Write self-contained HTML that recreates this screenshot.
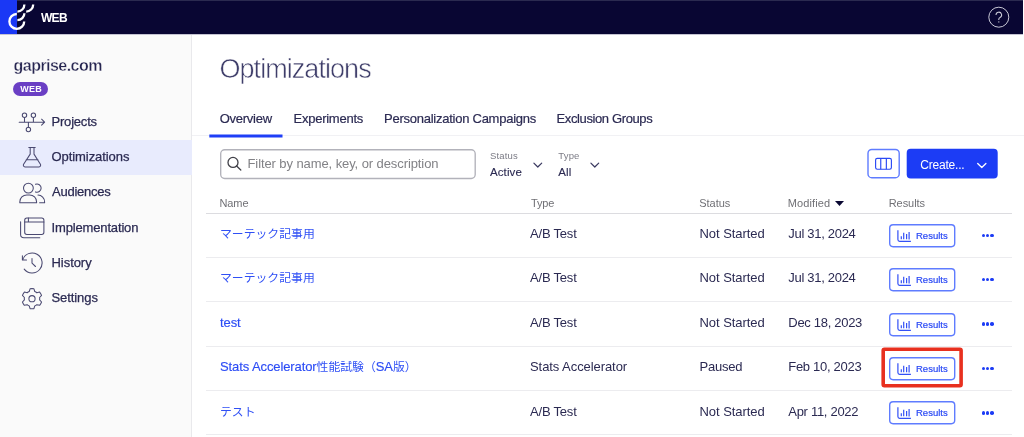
<!DOCTYPE html>
<html lang="en"><head><meta charset="utf-8"><title>Optimizations</title>
<style>
*{box-sizing:border-box;margin:0;padding:0}
html,body{width:1024px;height:437px;overflow:hidden;background:#fff}
body{font-family:"Liberation Sans",sans-serif;color:#2c2b55;position:relative;font-size:13px}
.abs{position:absolute}
#hdr{position:absolute;left:0;top:0;width:1023px;height:34px;background:#090633;border-top:1px solid #2b2a50}
#hdrline{position:absolute;left:0;top:34px;width:1023px;height:1px;background:#c4c3d2}
#bluebar{position:absolute;left:0;top:0;width:17px;height:34px;background:#1a38f5}
#logo{position:absolute;left:0;top:0}
#hweb{position:absolute;left:40.9px;top:9.8px;font-size:12px;font-weight:bold;color:#fff;line-height:16px;letter-spacing:-0.6px}
#help{position:absolute;left:987px;top:6px}
#side{position:absolute;left:0;top:35px;width:192px;height:402px;background:#fafafa;border-right:1px solid #e9e9ec}
#site{position:absolute;left:13.6px;top:54.5px;font-size:16px;font-weight:bold;line-height:22px;letter-spacing:-0.55px;color:#262550;-webkit-text-stroke:0.35px #fafafa}
#badge{position:absolute;left:13.3px;top:82px;width:35px;height:14px;border-radius:7px;background:#6a3fc4;color:#fff;font-size:9px;font-weight:bold;line-height:14px;text-align:center;letter-spacing:0.2px;padding-left:0.6px}
.nav{position:absolute;left:0;width:191px;height:35px}
.nav.sel{background:#e8ebfd;width:192px}
.nav span{position:absolute;left:51.5px;top:9.3px;line-height:16px;font-size:13px;letter-spacing:-0.2px;color:#2b2a52;-webkit-text-stroke:0.25px #2b2a52}
.nav svg{position:absolute;left:0;top:0;fill:none;stroke:#4a4971;stroke-width:1.05;stroke-linecap:round;stroke-linejoin:round}
#title{position:absolute;left:219.5px;top:52.8px;font-size:27px;line-height:32px;letter-spacing:-0.95px;color:#3f3e6a;-webkit-text-stroke:0.55px #fff}
.tab{position:absolute;top:111px;font-size:13px;line-height:16px;letter-spacing:-0.25px;color:#2b2a52;-webkit-text-stroke:0.2px #2b2a52;white-space:nowrap}
#tabline{position:absolute;left:192px;top:135px;width:832px;height:1px;background:#f1f1f4}
#search{position:absolute;left:219.6px;top:148.8px;width:256px;height:30.2px}
#search span{position:absolute;left:27.9px;top:7.5px;font-size:13px;line-height:16px;color:#828286;letter-spacing:-0.09px;white-space:nowrap}
#search svg{position:absolute;left:0;top:0;overflow:visible}
.flab{position:absolute;top:150px;font-size:9.5px;line-height:12px;color:#7c7c86;letter-spacing:0.15px}
.chev{position:absolute}
.fval{position:absolute;top:164.7px;font-size:11.5px;line-height:14px;color:#2b2a52;-webkit-text-stroke:0.12px #2b2a52;letter-spacing:0.1px}
#create{position:absolute;left:906.7px;top:149px;width:91px;height:29.5px;color:#fff}
#create span{position:absolute;left:13.5px;top:7.7px;font-size:12px;line-height:16px;letter-spacing:-0.2px}
.th{position:absolute;top:195.8px;font-size:11px;line-height:14px;color:#707075;letter-spacing:-0.05px}
#thline{position:absolute;left:206px;top:213px;width:805.5px;height:1px;background:#dcdce0}
.row{position:absolute;left:206px;width:805.5px;height:44.36px;border-bottom:1px solid #ececef}
.c{position:absolute;top:12.6px;line-height:16px;font-size:13px;white-space:nowrap;color:#2b2a52;letter-spacing:-0.2px}
.name{left:14px;color:#2c4cf5}
.type{left:324px}
.status{left:493.5px}
.mod{left:582.3px;letter-spacing:-0.3px}
.cjk{font-family:"Liberation Sans","Noto Sans CJK JP",sans-serif;font-size:11.85px;letter-spacing:0;color:#3050f5;display:inline-block;line-height:16px}
.lt{letter-spacing:-0.1px;-webkit-text-stroke:0.15px #2c4cf5}
.rbtn{position:absolute;left:682.8px;top:10.5px;width:67px;height:24px}
.rbtn span{position:absolute;left:27.2px;top:5.9px;font-size:9.5px;line-height:12px;color:#2a49f5;letter-spacing:0;-webkit-text-stroke:0.2px #2a49f5}
.rbtn .ri{position:absolute;left:0;top:0}
.dots{position:absolute;left:775.8px;top:20.1px;width:13px;height:4px}
.dots i{position:absolute;top:0;width:3.5px;height:3.5px;border-radius:50%;background:#1c3cf5}
.dots i:nth-child(1){left:0}.dots i:nth-child(2){left:4.15px}.dots i:nth-child(3){left:8.3px}
#wrap{position:absolute;left:0;top:0;width:1024px;height:437px;will-change:transform}
</style></head><body><div id="wrap">
<div id="hdr"></div><div id="hdrline"></div><div id="bluebar"></div>
<svg id="logo" width="40" height="34" viewBox="0 0 40 34" fill="none" stroke="#fff" stroke-width="2.3">
<path d="M16.8 14A7.4 7.4 0 1 0 24.2 21.4"/>
<path d="M24.4 13.2A7 7 0 0 1 17.4 20.2"/>
<path d="M24.4 4.6A7 7 0 0 1 17.4 11.6"/>
<path d="M33.2 4.6A7 7 0 0 1 26.2 11.6"/>
</svg>
<div id="hweb">WEB</div>
<svg id="help" width="24" height="24" viewBox="0 0 24 24" fill="none" stroke="#c9c9d6" stroke-width="1"><circle cx="11.8" cy="11.2" r="10"/><g transform="translate(11.8 11.5) scale(.88) translate(-11.8 -11.5)"><path d="M8.6 8.6a3.2 3.2 0 1 1 4.6 2.9c-.9.5-1.4 1.1-1.4 2.1v.6" stroke-width="1.2"/><circle cx="11.8" cy="16.5" r=".75" fill="#c9c9d6" stroke="none"/></g></svg>

<div id="side"></div>
<div id="site">gaprise.com</div>
<div id="badge">WEB</div>

<div class="nav" style="top:104.5px"><svg width="50" height="35" viewBox="0 104.5 50 35"><path d="M19.2 121.7H44.6M41.6 118.7l3 3-3 3M24.5 117v4.7M33.4 117v4.7M28.4 121.7v5"/><circle cx="24.5" cy="114.7" r="2.2"/><circle cx="33.4" cy="114.7" r="2.2"/><circle cx="28.4" cy="129" r="2.2"/></svg><span>Projects</span></div>
<div class="nav sel" style="top:139.7px"><svg width="50" height="35" viewBox="0 139.7 50 35"><path d="M28.8 147.2h6.4M30.2 147.2v6.6l-6.6 10.2a1.7 1.7 0 0 0 1.4 2.6h14a1.7 1.7 0 0 0 1.4-2.6l-6.4-10.2v-6.6M26.2 159.4h11.8"/></svg><span style="letter-spacing:-0.07px">Optimizations</span></div>
<div class="nav" style="top:174.5px"><svg width="50" height="35" viewBox="0 174.5 50 35"><circle cx="28.4" cy="187.6" r="4.9"/><path d="M19.8 202.2v-.8a7 7 0 0 1 7-7h2.8a7 7 0 0 1 7 7v.8zM35.5 183.8a4.1 4.1 0 1 1 0 7.6M38 194.6a6.8 6.8 0 0 1 6.6 6.8v.8h-5"/></svg><span style="letter-spacing:-0.25px;left:52px">Audiences</span></div>
<div class="nav" style="top:209.5px"><svg width="50" height="35" viewBox="0 209.5 50 35"><rect x="24.7" y="217.5" width="19.2" height="16.5" rx="2.2"/><path d="M24.7 221.5h19.2M28.4 217.5v4M20.6 221.3v12.6a3.3 3.3 0 0 0 3.3 3.3h15.9"/></svg><span style="top:10.2px;letter-spacing:-0.15px">Implementation</span></div>
<div class="nav" style="top:244.5px"><svg width="50" height="35" viewBox="0 244.5 50 35"><path d="M22.6 259.3A10 10 0 1 1 24.2 268.6M22.4 255.3v4.1h4.1M32 258v4.6l3.5 3.4"/></svg><span style="top:10.1px;letter-spacing:-0.05px">History</span></div>
<div class="nav" style="top:279.5px"><svg width="50" height="35" viewBox="0 279.5 50 35"><path d="M34.76 291.01L33.93 288.29A10.10 10.10 0 0 0 30.07 288.29L29.24 291.01A7.70 7.70 0 0 0 27.15 292.22L24.38 291.57A10.10 10.10 0 0 0 22.45 294.91L24.39 297.00A7.70 7.70 0 0 0 24.39 299.40L22.45 301.49A10.10 10.10 0 0 0 24.38 304.83L27.15 304.18A7.70 7.70 0 0 0 29.24 305.39L30.07 308.11A10.10 10.10 0 0 0 33.93 308.11L34.76 305.39A7.70 7.70 0 0 0 36.85 304.18L39.62 304.83A10.10 10.10 0 0 0 41.55 301.49L39.61 299.40A7.70 7.70 0 0 0 39.61 297.00L41.55 294.91A10.10 10.10 0 0 0 39.62 291.57L36.85 292.22A7.70 7.70 0 0 0 34.76 291.01Z"/><circle cx="32" cy="298.2" r="3.1"/></svg><span style="top:10px;letter-spacing:-0.08px">Settings</span></div>

<div id="title">Optimizations</div>
<div class="tab" style="left:219.7px">Overview</div>
<div class="tab" style="left:293.5px">Experiments</div>
<div class="tab" style="left:384px">Personalization Campaigns</div>
<div class="tab" style="left:556.5px;letter-spacing:-0.38px">Exclusion Groups</div>
<div id="tabline"></div><svg class="abs" style="left:208px;top:133px" width="76" height="6" viewBox="208 133 76 6"><rect x="209.3" y="134.5" width="73.2" height="3" fill="#1f3ff7"/></svg>

<div id="search"><svg width="256" height="31" viewBox="0 0 256 31" fill="none" stroke="#404048" stroke-width="1.3" stroke-linecap="round"><rect x="0.7" y="0.7" width="254.5" height="28.8" rx="4" stroke="#b2b2ba" stroke-width="1.35"/><circle cx="13" cy="13.4" r="5"/><path d="M16.6 17l4.2 4"/></svg><span>Filter by name, key, or description</span></div>
<div class="flab" style="left:490px">Status</div><div class="fval" style="left:490px">Active</div>
<svg class="chev" style="left:532px;top:160px" width="12" height="10" viewBox="0 0 12 10" fill="none" stroke="#3a3960" stroke-width="1.2" stroke-linecap="round" stroke-linejoin="round"><path d="M1.9 3.1l3.9 3.9L9.7 3.1"/></svg>
<div class="flab" style="left:558.3px">Type</div><div class="fval" style="left:558.3px">All</div>
<svg class="chev" style="left:589px;top:160px" width="12" height="10" viewBox="0 0 12 10" fill="none" stroke="#3a3960" stroke-width="1.2" stroke-linecap="round" stroke-linejoin="round"><path d="M1.9 3.1l3.9 3.9L9.7 3.1"/></svg>

<svg class="abs" style="left:866px;top:147px" width="134" height="33" viewBox="866 147 134 33" fill="none"><rect x="868" y="149.5" width="31.2" height="28.2" rx="3.8" stroke="#5f7cff" stroke-width="1.4"/><rect x="875.6" y="158.4" width="15.8" height="10.8" rx="1.7" stroke="#2a49f5" stroke-width="1.15"/><path d="M880.75 158.4v10.8M886.35 158.4v10.8" stroke="#2a49f5" stroke-width="1.15"/><rect x="906.7" y="148.8" width="91" height="29.6" rx="4" fill="#1c3cf5"/><path d="M977.7 163.5l4.1 4 4.1-4" stroke="#fff" stroke-width="1.3" stroke-linecap="round" stroke-linejoin="round"/></svg>
<div id="create"><span>Create...</span></div>

<div class="th" style="left:219.4px">Name</div>
<div class="th" style="left:530.9px;letter-spacing:-0.1px">Type</div>
<div class="th" style="left:699.3px">Status</div>
<div class="th" style="left:787.8px;letter-spacing:0.1px">Modified</div>
<svg class="abs" style="left:835px;top:201px" width="9" height="5" viewBox="0 0 9 5"><path d="M0 0h9L4.5 5z" fill="#0a0833"/></svg>
<div class="th" style="left:888.7px">Results</div>
<div id="thline"></div>
<div class="row" style="top:213.50px">
<div class="c name"><span class="cjk">マーテック記事用</span></div><div class="c type">A/B Test</div><div class="c status" style="letter-spacing:-0.05px">Not Started</div><div class="c mod">Jul 31, 2024</div>
<div class="rbtn"><svg class="ri" width="67" height="24" viewBox="0 0 67 24"><rect x="0.7" y="0.7" width="65" height="22" rx="3.4" fill="none" stroke="#5f7cff" stroke-width="1.4"/><path d="M8.9 6.3V15.6a1.8 1.8 0 0 0 1.8 1.8H21.9M12.3 15.3V12.3M14.7 15.3V8.7M17.6 15.3V10M20.1 15.5V8" fill="none" stroke="#3350f6" stroke-width="1.2"/></svg><span>Results</span></div>
<div class="dots"><i></i><i></i><i></i></div>
</div>
<div class="row" style="top:257.86px">
<div class="c name"><span class="cjk">マーテック記事用</span></div><div class="c type">A/B Test</div><div class="c status" style="letter-spacing:-0.05px">Not Started</div><div class="c mod">Jul 31, 2024</div>
<div class="rbtn"><svg class="ri" width="67" height="24" viewBox="0 0 67 24"><rect x="0.7" y="0.7" width="65" height="22" rx="3.4" fill="none" stroke="#5f7cff" stroke-width="1.4"/><path d="M8.9 6.3V15.6a1.8 1.8 0 0 0 1.8 1.8H21.9M12.3 15.3V12.3M14.7 15.3V8.7M17.6 15.3V10M20.1 15.5V8" fill="none" stroke="#3350f6" stroke-width="1.2"/></svg><span>Results</span></div>
<div class="dots"><i></i><i></i><i></i></div>
</div>
<div class="row" style="top:302.22px">
<div class="c name"><span class="lt">test</span></div><div class="c type">A/B Test</div><div class="c status" style="letter-spacing:-0.05px">Not Started</div><div class="c mod">Dec 18, 2023</div>
<div class="rbtn"><svg class="ri" width="67" height="24" viewBox="0 0 67 24"><rect x="0.7" y="0.7" width="65" height="22" rx="3.4" fill="none" stroke="#5f7cff" stroke-width="1.4"/><path d="M8.9 6.3V15.6a1.8 1.8 0 0 0 1.8 1.8H21.9M12.3 15.3V12.3M14.7 15.3V8.7M17.6 15.3V10M20.1 15.5V8" fill="none" stroke="#3350f6" stroke-width="1.2"/></svg><span>Results</span></div>
<div class="dots"><i></i><i></i><i></i></div>
</div>
<div class="row" style="top:346.58px">
<div class="c name"><span class="lt">Stats Accelerator</span><span class="cjk">性能試験（</span><span class="lt">SA</span><span class="cjk">版）</span></div><div class="c type" style="letter-spacing:-0.07px">Stats Accelerator</div><div class="c status">Paused</div><div class="c mod">Feb 10, 2023</div>
<div class="rbtn"><svg class="ri" width="67" height="24" viewBox="0 0 67 24"><rect x="0.7" y="0.7" width="65" height="22" rx="3.4" fill="none" stroke="#5f7cff" stroke-width="1.4"/><path d="M8.9 6.3V15.6a1.8 1.8 0 0 0 1.8 1.8H21.9M12.3 15.3V12.3M14.7 15.3V8.7M17.6 15.3V10M20.1 15.5V8" fill="none" stroke="#3350f6" stroke-width="1.2"/></svg><span>Results</span></div>
<div class="dots"><i></i><i></i><i></i></div>
</div>
<div class="row" style="top:390.94px">
<div class="c name"><span class="cjk">テスト</span></div><div class="c type">A/B Test</div><div class="c status" style="letter-spacing:-0.05px">Not Started</div><div class="c mod">Apr 11, 2022</div>
<div class="rbtn"><svg class="ri" width="67" height="24" viewBox="0 0 67 24"><rect x="0.7" y="0.7" width="65" height="22" rx="3.4" fill="none" stroke="#5f7cff" stroke-width="1.4"/><path d="M8.9 6.3V15.6a1.8 1.8 0 0 0 1.8 1.8H21.9M12.3 15.3V12.3M14.7 15.3V8.7M17.6 15.3V10M20.1 15.5V8" fill="none" stroke="#3350f6" stroke-width="1.2"/></svg><span>Results</span></div>
<div class="dots"><i></i><i></i><i></i></div>
</div>

<svg class="abs" style="left:880px;top:346px" width="86" height="44" viewBox="880 346 86 44"><rect x="883.2" y="349.3" width="77.9" height="36.5" rx="1.2" fill="none" stroke="#e8301f" stroke-width="3.6"/></svg>
</div></body></html>
